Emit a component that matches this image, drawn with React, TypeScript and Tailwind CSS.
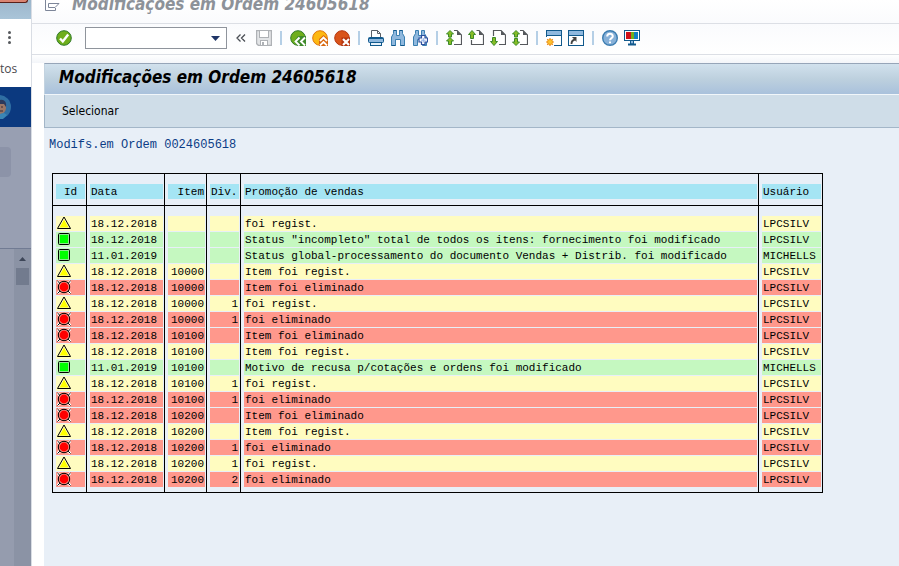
import type { ReactNode } from "react";

type Kind = "new" | "changed" | "deleted";
type Row = { kind: Kind; date: string; item: string; div: string; text: string; user: string };

const r = (kind: Kind, date: string, item: string, div: string, text: string, user = "LPCSILV"): Row => ({
  kind, date, item, div, text, user,
});

const rows: Row[] = [
  r("new", "18.12.2018", "", "", "foi regist."),
  r("changed", "18.12.2018", "", "", 'Status "incompleto" total de todos os itens: fornecimento foi modificado'),
  r("changed", "11.01.2019", "", "", "Status global-processamento do documento Vendas + Distrib. foi modificado", "MICHELLS"),
  r("new", "18.12.2018", "10000", "", "Item foi regist."),
  r("deleted", "18.12.2018", "10000", "", "Item foi eliminado"),
  r("new", "18.12.2018", "10000", "1", "foi regist."),
  r("deleted", "18.12.2018", "10000", "1", "foi eliminado"),
  r("deleted", "18.12.2018", "10100", "", "Item foi eliminado"),
  r("new", "18.12.2018", "10100", "", "Item foi regist."),
  r("changed", "11.01.2019", "10100", "", "Motivo de recusa p/cotações e ordens foi modificado", "MICHELLS"),
  r("new", "18.12.2018", "10100", "1", "foi regist."),
  r("deleted", "18.12.2018", "10100", "1", "foi eliminado"),
  r("deleted", "18.12.2018", "10200", "", "Item foi eliminado"),
  r("new", "18.12.2018", "10200", "", "Item foi regist."),
  r("deleted", "18.12.2018", "10200", "1", "foi eliminado"),
  r("new", "18.12.2018", "10200", "1", "foi regist."),
  r("deleted", "18.12.2018", "10200", "2", "foi eliminado"),
];

const fills: Record<Kind, string> = {
  new: "bg-[#fffcc0]",
  changed: "bg-[#c5f8c0]",
  deleted: "bg-[#ff988c]",
};

const mono = "font-['Liberation_Mono','Courier_New',monospace]";
const heading =
  "font-['DejaVu_Sans_Condensed','DejaVu_Sans',Verdana,sans-serif] font-bold italic text-[17px] leading-6 whitespace-nowrap";

function Svg({ children }: { children: ReactNode }) {
  return (
    <svg width="16" height="16" viewBox="0 0 16 16" fill="none" aria-hidden="true">
      {children}
    </svg>
  );
}

function StatusIcon({ kind }: { kind: Kind }) {
  return (
    <svg width="14" height="14" viewBox="0 0 14 14" fill="none" className="block" aria-hidden="true">
      {kind === "new" && (
        <>
          <path d="M7 1 L13.5 12.5 H0.5 Z" fill="#fffcc0" stroke="#000" />
          <path d="M7 3.5 L11.5 11.5 H2.5 Z" fill="#ff0" />
        </>
      )}
      {kind === "changed" && (
        <>
          <rect x="1.5" y="1.5" width="11" height="11" rx="1" fill="#8fe88f" stroke="#000" />
          <rect x="3" y="3" width="8" height="8" fill="#0f0" />
        </>
      )}
      {kind === "deleted" && (
        <>
          <path d="M0.5 1 L13.5 13.5 M13.5 1 L0.5 13.5" stroke="#fff" strokeWidth="2.4" />
          <path d="M0.5 1 L13.5 13.5 M13.5 1 L0.5 13.5" stroke="#000" />
          <circle cx="7" cy="7" r="5.7" fill="#ff988c" stroke="#000" />
          <circle cx="7" cy="7" r="4.4" fill="#f00" />
        </>
      )}
    </svg>
  );
}

const disc = (fill: string, stroke: string) => <circle cx="8" cy="8" r="7.3" fill={fill} stroke={stroke} />;

const backIcon = (
  <Svg>
    {disc("#6fae1c", "#2f7a28")}
    <path d="M8 6 H16 V16 H8 L4 11.5 Z" fill="#3f8a2c" />
    <path d="M9.5 7.5 L5.5 11.5 L9.5 15.5 M15 7.5 L11 11.5 L15 15.5" stroke="#fff" strokeWidth="1.9" />
  </Svg>
);
const exitIcon = (
  <Svg>
    {disc("#fdb813", "#e0760a")}
    <path d="M7 16 V9 L11.5 5 L16 9 V16 Z" fill="#d8660d" />
    <path d="M8 11 L11.5 7.5 L15 11 M8 15.5 L11.5 12 L15 15.5" stroke="#fff" strokeWidth="1.8" />
  </Svg>
);
const cancelIcon = (
  <Svg>
    {disc("#d9541a", "#b5360f")}
    <rect x="7.5" y="7.5" width="8.5" height="8.5" fill="#b5360f" />
    <path d="M9 9 L15 15 M15 9 L9 15" stroke="#fff" strokeWidth="2.2" />
  </Svg>
);
const printIcon = (
  <Svg>
    <path d="M3.5 7 V0.5 H9.5 L12.5 3.5 V7" fill="#fff" stroke="#5a5f66" />
    <path d="M9.5 0.5 V3.5 H12.5" stroke="#5a5f66" />
    <rect x="0.5" y="7.5" width="15" height="5" rx="1" fill="#8fb8de" stroke="#11598c" />
    <path d="M1 8.5 H15" stroke="#11598c" />
    <rect x="2.5" y="12.5" width="11" height="3" fill="#e6f1fb" stroke="#11598c" />
  </Svg>
);
const binocularShape = (
  <path
    d="M1.5 15.5 V7 L3.5 3.5 V0.5 H6.5 V5.5 H9.5 V0.5 H12.5 V3.5 L14.5 7 V15.5 H10.5 V9.5 H5.5 V15.5 Z"
    fill="#8fb8de"
    stroke="#3a7fb0"
  />
);
const findIcon = (
  <Svg>
    {binocularShape}
    <path d="M3.5 0.5 H6.5 M9.5 0.5 H12.5 M1.5 15.5 H5.5 M10.5 15.5 H14.5" stroke="#11598c" />
  </Svg>
);
const findNextIcon = (
  <Svg>
    {binocularShape}
    <path d="M9.5 5.5 H13 V8 H15.5 V12 H13 V14.5 H9.5 V12 H7 V8 H9.5 Z" fill="#fff" stroke="#2d4f9e" strokeWidth="1.2" />
    <path d="M11.3 8 V12.5 M9 10.2 H13.6" stroke="#8fb0e6" />
  </Svg>
);

function PageIcon({ up, down, top }: { up?: boolean; down?: boolean; top?: boolean }) {
  const both = up && down;
  return (
    <Svg>
      <path
        d={both ? "M8 0.5 H11 L15.5 5 V14.5 H8" : up ? "M8.5 0.5 H11 L15.5 5 V14.5 H3.5 V10" : "M3.5 6 V0.5 H11 L15.5 5 V14.5 H9"}
        fill="#fff"
        stroke="#55585c"
        strokeWidth="1.2"
      />
      <path d="M11 0.5 V5 H15.5 Z" fill="#55585c" />
      {both ? (
        <>
          <path d="M4 0.5 L7.5 4 H5.5 V7 H2.5 V4 H0.5 Z" fill="#86bc25" stroke="#3d8a28" />
          {top ? (
            <path d="M4 7.5 L7.5 11 H5.5 V14.5 H2.5 V11 H0.5 Z" fill="#86bc25" stroke="#3d8a28" />
          ) : (
            <path d="M4 15.5 L7.5 12 H5.5 V8.5 H2.5 V12 H0.5 Z" fill="#86bc25" stroke="#3d8a28" />
          )}
        </>
      ) : up ? (
        <path d="M4 0.5 L7.5 4.5 H5.5 V8.5 H2.5 V4.5 H0.5 Z" fill="#86bc25" stroke="#3d8a28" />
      ) : (
        <path d="M4 15.5 L7.5 11.5 H5.5 V7.5 H2.5 V11.5 H0.5 Z" fill="#86bc25" stroke="#3d8a28" />
      )}
    </Svg>
  );
}

const windowFrame = (
  <>
    <rect x="0.5" y="0.5" width="15" height="15" fill="#fff" stroke="#11598c" />
    <rect x="1" y="1" width="14" height="4" fill="#8fb8de" />
    <path d="M0.5 5.5 H15.5" stroke="#11598c" />
  </>
);
const newSessionIcon = (
  <Svg>
    {windowFrame}
    <rect x="0" y="7" width="8" height="9" fill="#fff" />
    <path d="M4 8 V16 M0 12 H8 M1.2 9.2 L6.8 14.8 M6.8 9.2 L1.2 14.8" stroke="#e8861a" strokeWidth="1.2" />
    <circle cx="4" cy="12" r="2.5" fill="#fdc32f" stroke="#f09a1a" />
  </Svg>
);
const shortcutIcon = (
  <Svg>
    {windowFrame}
    <path d="M3.5 14 C3.5 11 4.5 10 7 9.5" stroke="#444" strokeWidth="1.8" />
    <path d="M4 7 H8.5 V12 Z" fill="#444" />
  </Svg>
);
const helpIcon = (
  <Svg>
    <circle cx="8" cy="8" r="7.3" fill="#86b0d8" stroke="#3b7cb0" strokeWidth="1.4" />
    <path d="M5.2 6.5 C5.2 2.9 10.8 2.9 10.8 6.2 C10.8 8.2 8 8 8 10.3 M8 11.5 V13.3" stroke="#fff" strokeWidth="2" />
  </Svg>
);
const layoutIcon = (
  <Svg>
    <rect x="0.5" y="0.5" width="15" height="10" fill="#fff" stroke="#11598c" />
    <rect x="2" y="2" width="5" height="7" fill="#d0121b" />
    <rect x="7" y="2" width="3" height="7" fill="#6fae1c" />
    <rect x="10" y="2" width="4" height="7" fill="#0f7fc4" />
    <path d="M6.5 11 V14 H9.5 V11" fill="#8fb8de" stroke="#11598c" />
    <path d="M4 14.5 H12" stroke="#11598c" strokeWidth="2" />
  </Svg>
);

function Tool({ label, children }: { label: string; children: ReactNode }) {
  return (
    <button type="button" aria-label={label} className="flex size-4 shrink-0 items-center justify-center">
      {children}
    </button>
  );
}

function Separator() {
  return (
    <div className="flex w-1.5 shrink-0 justify-center">
      <div className="h-3.5 w-0.5 bg-[#b5cfe6]" />
    </div>
  );
}

function Sidebar() {
  return (
    <aside className="flex w-8 shrink-0 flex-col overflow-hidden border-r border-[#d9dde4] bg-[#989fb2]">
      <div className="h-[19px] bg-linear-to-b from-[#9cb6cb] to-[#a9c4d8]">
        <div className="h-[3px] w-7 rounded-br border-r border-b border-[#5a2019] bg-[#d98472]" />
      </div>
      <div className="flex h-[68px] flex-col bg-white">
        <div className="flex h-9 items-center pt-px pl-2">
          <button type="button" aria-label="Menu" className="flex flex-col gap-0.5">
            <span className="size-[3px] rounded-full bg-[#55585c]" />
            <span className="size-[3px] rounded-full bg-[#55585c]" />
            <span className="size-[3px] rounded-full bg-[#55585c]" />
          </button>
        </div>
        <span className="pt-1.5 font-['Open_Sans',sans-serif] text-xs leading-4 text-[#4a4a4e]">tos</span>
      </div>
      <div className="flex h-10 items-start bg-[#0b397f] pt-2">
        <svg width="11" height="24" viewBox="0 0 11 24" className="block" aria-hidden="true">
          <circle cx="-1" cy="12" r="12" fill="#2f6ea3" />
          <path d="M0 6 C4 5 6 8 6 12 C6 16 4 19 0 19 Z" fill="#9a7766" />
          <path d="M0 5 C4 4 7 7 6 12 L4 9 L0 9 Z" fill="#2b3a5c" />
          <path d="M1 12 H3 M0 16 H3" stroke="#3a2c35" />
          <path d="M0 19 L4 18 L7 20 L3 24 H0 Z" fill="#3b86b5" />
        </svg>
      </div>
      <div className="h-[121px] bg-[#989fb2] pt-5">
        <div className="h-[30px] w-[11px] rounded-r bg-[#8c93a8]" />
      </div>
      <div className="flex flex-1 justify-end border-t border-[#717b93] bg-[#959cae]">
        <div className="flex w-[17px] flex-col items-center gap-[7px] bg-[#8b93a5] pt-2">
          <svg width="7" height="4" viewBox="0 0 7 4" className="block" aria-hidden="true">
            <path d="M3.5 0 L7 4 H0 Z" fill="#3d4658" />
          </svg>
          <div className="h-[17px] w-[13px] bg-[#727b8e]" />
        </div>
      </div>
    </aside>
  );
}

function Toolbar() {
  return (
    <div className="flex h-[31px] items-center gap-1.5 border-b border-[#dcdfe5] bg-linear-to-b from-[#fafbfd] to-white pr-4 pb-0.5 pl-6">
      <Tool label="Confirmar">
        <Svg>
          {disc("#6fae1c", "#2f7a28")}
          <path d="M4 8.5 L6.8 11.5 L12.2 4.5" stroke="#fff" strokeWidth="2.4" />
        </Svg>
      </Tool>
      <select
        aria-label="Código de transação"
        className="ml-[7px] h-[22px] w-[142px] shrink-0 appearance-none border border-[#8f949c] bg-white"
      >
        <option value="" />
      </select>
      <svg width="9" height="5" viewBox="0 0 9 5" className="pointer-events-none z-10 -ml-[22px] shrink-0" aria-hidden="true">
        <path d="M0 0 H9 L4.5 5 Z" fill="#1f3567" />
      </svg>
      <div className="w-px shrink-0" />
      <Tool label="Recolher">
        <Svg>
          <path d="M7.5 4.5 L4 8 L7.5 11.5 M12 4.5 L8.5 8 L12 11.5" stroke="#4a4e55" strokeWidth="1.3" />
        </Svg>
      </Tool>
      <div className="ml-px flex items-center gap-1.5">
        <Tool label="Gravar">
          <Svg>
            <path d="M0.5 0.5 H15.5 V15.5 H2.5 L0.5 13.5 Z" fill="#e2e4e6" stroke="#aeb1b5" strokeWidth="1.4" />
            <rect x="3.5" y="0.5" width="9" height="7" fill="#fff" stroke="#aeb1b5" />
            <rect x="4.5" y="10.5" width="7" height="5" fill="#fff" stroke="#aeb1b5" />
            <rect x="6" y="12" width="2" height="3" fill="#aeb1b5" />
          </Svg>
        </Tool>
        <Separator />
        <Tool label="Voltar">{backIcon}</Tool>
        <Tool label="Encerrar">{exitIcon}</Tool>
        <Tool label="Cancelar">{cancelIcon}</Tool>
        <Separator />
        <Tool label="Imprimir">{printIcon}</Tool>
        <Tool label="Procurar">{findIcon}</Tool>
        <Tool label="Continuar procura">{findNextIcon}</Tool>
        <Separator />
        <Tool label="Primeira página"><PageIcon up down top /></Tool>
        <Tool label="Página anterior"><PageIcon up /></Tool>
        <Tool label="Página seguinte"><PageIcon down /></Tool>
        <Tool label="Última página"><PageIcon up down /></Tool>
        <Separator />
        <Tool label="Novo modo">{newSessionIcon}</Tool>
        <Tool label="Criar atalho">{shortcutIcon}</Tool>
        <Separator />
        <Tool label="Ajuda">{helpIcon}</Tool>
        <Tool label="Layout">{layoutIcon}</Tool>
      </div>
    </div>
  );
}

const headCell = "border-r border-b border-black pt-2.5 pr-px pb-1.5 pl-[3px] font-normal";
const headFill = "block h-[15px] bg-[#a5e5f4] px-px leading-[17px]";

function Cell({ kind, right, children }: { kind: Kind; right?: boolean; children?: ReactNode }) {
  return (
    <td className="h-4 border-r border-black pt-0 pr-px pb-px pl-[3px]">
      <div className={`h-[15px] px-px leading-[17px] ${right ? "text-right" : "text-left"} ${fills[kind]}`}>{children}</div>
    </td>
  );
}

function ChangeTable() {
  return (
    <table
      className={`ml-2 w-[771px] table-fixed border-separate border-spacing-0 border-t border-b border-l border-black text-[11px] whitespace-nowrap text-black ${mono}`}
    >
      <colgroup>
        <col className="w-[34px]" />
        <col className="w-[78px]" />
        <col className="w-[42px]" />
        <col className="w-[34px]" />
        <col />
        <col className="w-[64px]" />
      </colgroup>
      <thead>
        <tr>
          <th scope="col" className={`${headCell} text-center`}><span className={headFill}>Id</span></th>
          <th scope="col" className={`${headCell} text-left`}><span className={headFill}>Data</span></th>
          <th scope="col" className={`${headCell} text-right`}><span className={headFill}>Item</span></th>
          <th scope="col" className={`${headCell} text-left`}><span className={headFill}>Div.</span></th>
          <th scope="col" className={`${headCell} text-left`}><span className={headFill}>Promoção de vendas</span></th>
          <th scope="col" className={`${headCell} text-left`}><span className={headFill}>Usuário</span></th>
        </tr>
      </thead>
      <tbody>
        <tr aria-hidden="true">
          {[0, 1, 2, 3, 4, 5].map((i) => (
            <td key={i} className="h-2.5 border-r border-black p-0" />
          ))}
        </tr>
        {rows.map((row, i) => (
          <tr key={i}>
            <Cell kind={row.kind}><StatusIcon kind={row.kind} /></Cell>
            <Cell kind={row.kind}>{row.date}</Cell>
            <Cell kind={row.kind} right>{row.item}</Cell>
            <Cell kind={row.kind} right>{row.div}</Cell>
            <Cell kind={row.kind}>{row.text}</Cell>
            <Cell kind={row.kind}>{row.user}</Cell>
          </tr>
        ))}
        <tr aria-hidden="true">
          {[0, 1, 2, 3, 4, 5].map((i) => (
            <td key={i} className="h-1 border-r border-black p-0" />
          ))}
        </tr>
      </tbody>
    </table>
  );
}

export default function App() {
  return (
    <div className="flex min-h-screen bg-white">
      <Sidebar />
      <main className="flex min-w-0 flex-1 flex-col">
        <header className="flex h-6 items-start gap-3 overflow-hidden border-b border-[#dcdfe5] bg-linear-to-b from-white to-[#fafbfd] pl-3">
          <svg width="16" height="15" viewBox="0 0 16 15" fill="none" className="-mt-1 shrink-0" aria-hidden="true">
            <path d="M11.5 4 V1.5 H1.5 V14.5 H11.5 V12" stroke="#7d8699" />
            <path d="M4.5 11.5 V7.5 H15 L11 11.5 Z" fill="#fff" stroke="#7d8699" />
          </svg>
          <div className={`-mt-2 text-[#8d9299] ${heading}`}>Modificações em Ordem 24605618</div>
        </header>
        <Toolbar />
        <div className="h-2 bg-linear-to-b from-white to-[#f3f5f9]" />
        <div className="ml-3 flex flex-1 flex-col bg-[#e8eff7]">
          <div className="flex h-8 items-center border-t border-b border-l border-t-[#96a5b8] border-b-[#f1f6fa] border-l-[#c3d3e0] bg-linear-to-b from-[#d1e1ed] via-[#bdd0de] to-[#a9c1dc] pb-1 pl-3.5">
            <h1 className={`text-black ${heading}`}>Modificações em Ordem 24605618</h1>
          </div>
          <div className="flex h-[33px] items-center border-b border-l border-b-[#a3b6c8] border-l-[#a3b6c8] bg-[#cfdde8] pl-[17px]">
            <button type="button" className="font-['DejaVu_Sans_Condensed','DejaVu_Sans',sans-serif] text-xs leading-4 text-black">
              Selecionar
            </button>
          </div>
          <p className={`pt-[9px] pb-5 pl-[5px] text-xs leading-4 text-[#0b3c86] ${mono}`}>Modifs.em Ordem 0024605618</p>
          <ChangeTable />
        </div>
      </main>
    </div>
  );
}
